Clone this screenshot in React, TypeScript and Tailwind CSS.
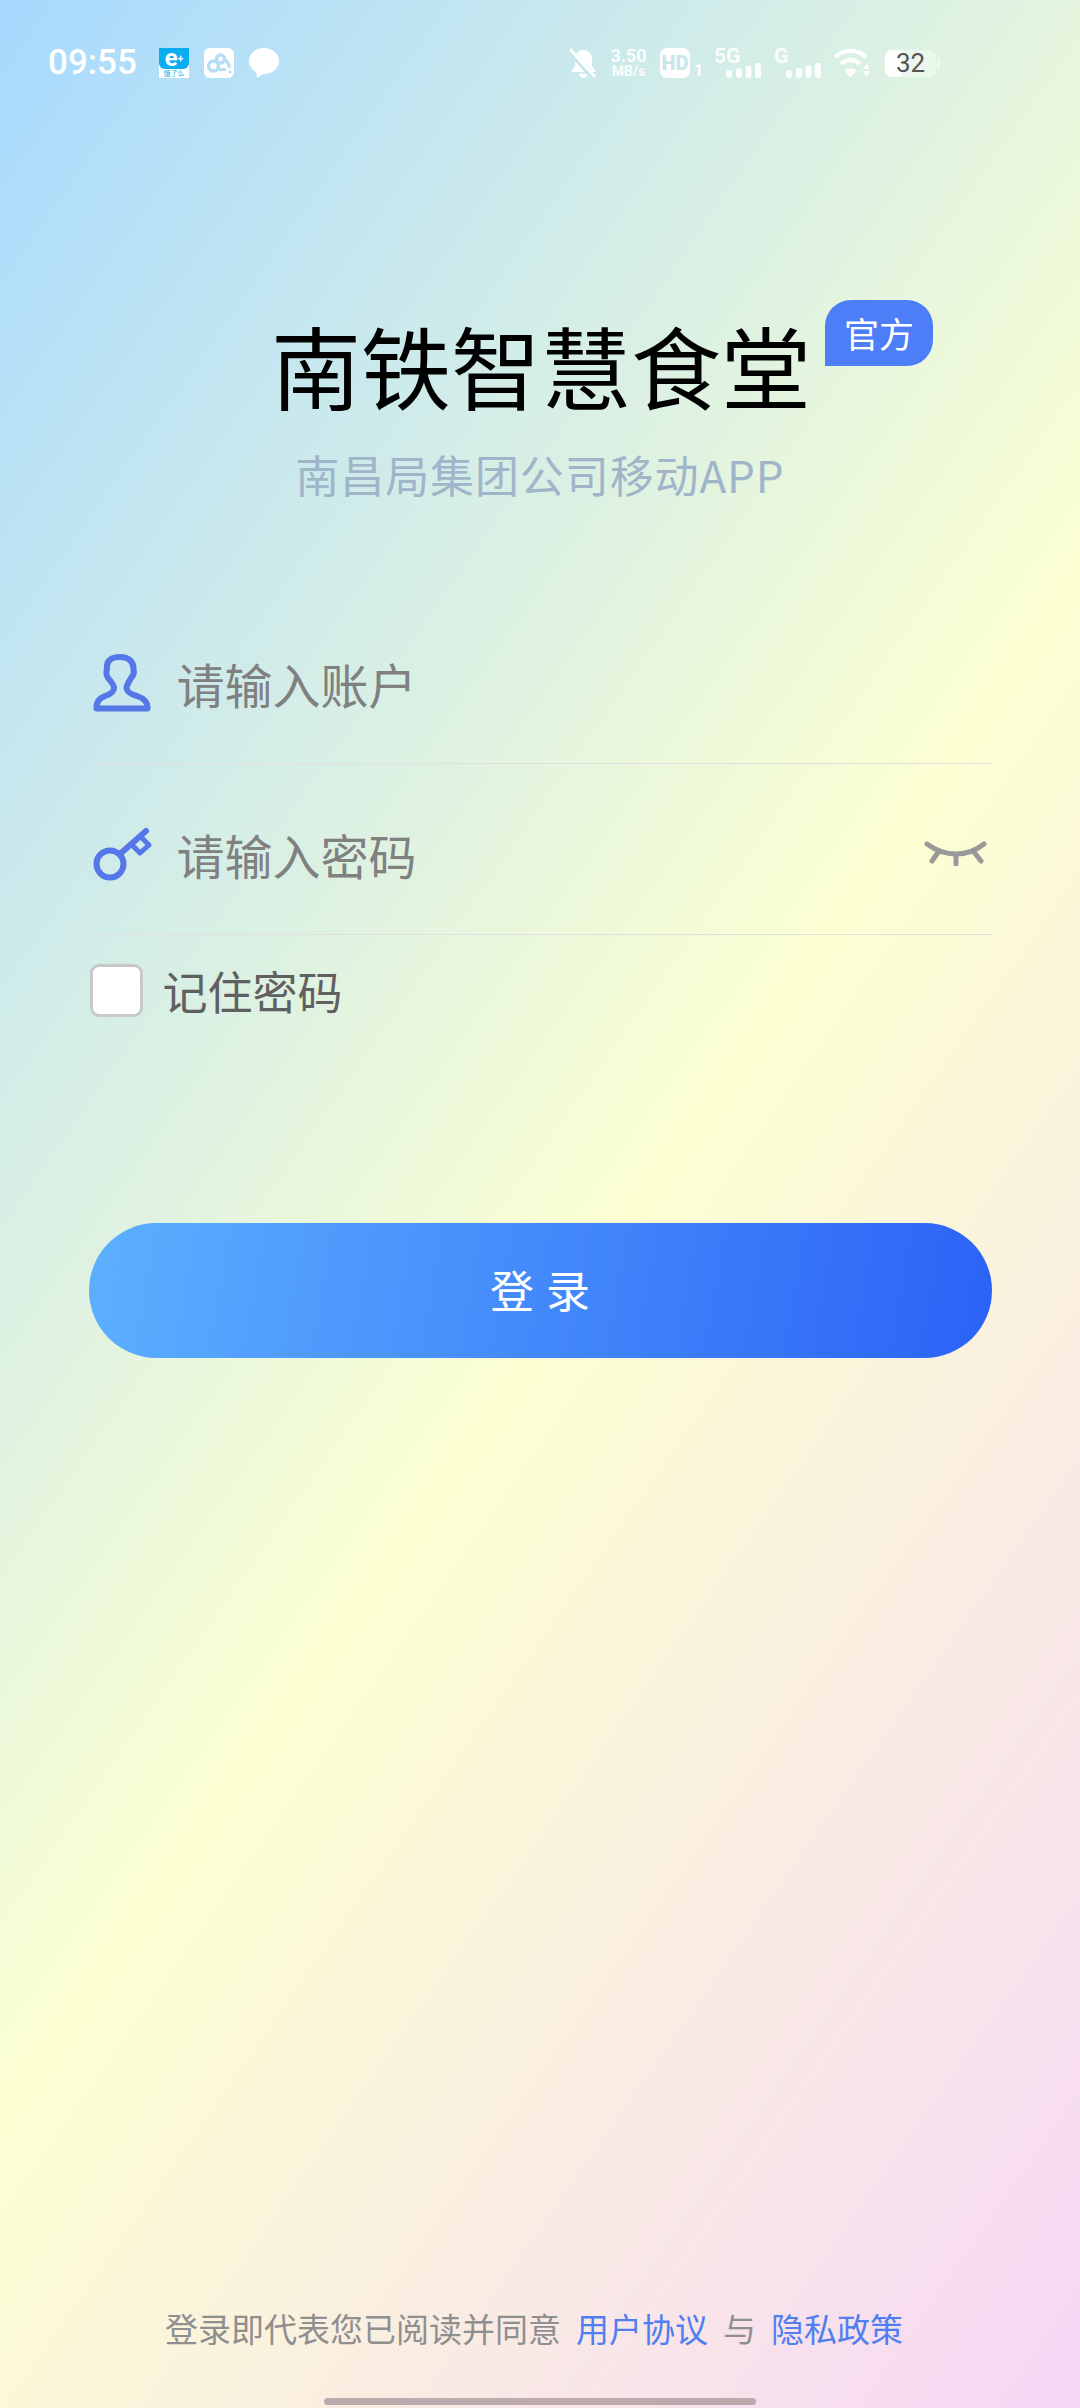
const SignalBars = () => (
  <svg width="35" height="15" viewBox="0 0 35 15" fill="#fff" fillOpacity="0.9">
    <rect x="0" y="7" width="6" height="8" rx="3" />
    <rect x="10" y="5" width="6" height="10" rx="2.500" />
    <rect x="19.500" y="2.500" width="6" height="12.500" rx="2" />
    <rect x="29" y="0" width="6" height="15" rx="2" />
  </svg>
);

const UserIcon = () => (
  <svg width="58" height="58" viewBox="0 0 58 58" fill="none" stroke="#5577e8" strokeWidth="6" strokeLinejoin="round">
    <path d="M3.500 54.500H54.500C55 48 50 44 44 42C37 40 33.500 38 33.500 34C33.500 31 36 28 38 24C41 21 41.500 19 40.500 16C41 8 36 3 27 3C18 3 13 7 14 15C13 18 13 21 15 24C18 28 21 30 21 34C21 38 18 40 12 42C7 44 3 48 3.500 54.500Z" />
  </svg>
);

const KeyIcon = () => (
  <svg width="60" height="56" viewBox="0 0 60 56" fill="none" stroke="#5577e8" strokeWidth="6" strokeLinecap="round" strokeLinejoin="round">
    <circle cx="17" cy="38" r="13.500" />
    <path d="M27 28L53 5" />
    <path d="M47 10L56 19L47 27L39 19" strokeWidth="5" />
  </svg>
);

const EyeClosed = () => (
  <svg width="63" height="25" viewBox="0 0 63 25" fill="none" stroke="#999" strokeWidth="5" strokeLinecap="round">
    <path d="M3 3C14 11 24 13 32 13C40 13 50 11 60 3" />
    <path d="M15 10L8 20M32 14V23M50 11L57 20" />
  </svg>
);

export default function App() {
  return (
    <div className="flex h-[2408px] w-[1080px] flex-col overflow-hidden bg-[linear-gradient(125deg,#a6d9ff_0%,#fcffd2_53.500%,#f6d6f6_100%)] font-['Noto_Sans_CJK_SC',sans-serif]">
      {/* status bar */}
      <div className="mt-[48px] flex h-[30px] items-center pl-[48px] font-['Roboto',sans-serif] text-white">
        <span className="w-[89px] text-[35px] leading-[30px] font-medium">09:55</span>
        <div className="ml-[22px] flex h-[30px] w-[30px] flex-col items-center bg-white">
          <div className="flex h-[21px] w-full items-center justify-center rounded-b-[6px] bg-[#0aaef0] text-[24px] leading-[21px] font-bold text-white">
            e<span className="text-[10px] leading-[10px]">+</span>
          </div>
          <span className="h-[9px] font-['Noto_Sans_CJK_SC',sans-serif] text-[7px] leading-[9px] text-[#0aaef0]">饿了么</span>
        </div>
        <svg className="ml-[15px]" width="30" height="30" viewBox="0 0 30 30">
          <rect width="30" height="30" rx="6" fill="#fff" />
          <circle cx="9.500" cy="18" r="5" fill="none" stroke="#b4ddf6" strokeWidth="3.500" />
          <circle cx="16.500" cy="11" r="4" fill="none" stroke="#b4ddf6" strokeWidth="3.500" />
          <path d="M20 11C23 13 25 16 25.500 20" stroke="#b4ddf6" strokeWidth="3" fill="none" />
          <path d="M12 21.500H22" stroke="#b4ddf6" strokeWidth="3" />
          <circle cx="26" cy="24" r="1.500" fill="#b4ddf6" />
        </svg>
        <svg className="ml-[15px]" width="30" height="30" viewBox="0 0 30 30" fill="#fff">
          <ellipse cx="15" cy="13" rx="15" ry="13" />
          <path d="M7 22L8 30L16 25Z" />
        </svg>

        <svg className="ml-[291px]" width="27" height="30" viewBox="0 0 27 30" fill="#fff" fillOpacity="0.92">
          <path d="M13.500 2C19 2 22 6 22 11V18L26 24H1L5 18V11C5 6 8 2 13.500 2Z" />
          <path d="M9 25.500H18C18 28 16 30 13.500 30C11 30 9 28 9 25.500Z" />
          <path d="M0 3L24 30" stroke="#c9e6ea" strokeWidth="6" />
          <path d="M0 1L25 29" stroke="#fff" strokeWidth="3" />
        </svg>
        <div className="ml-[13px] flex w-[37px] flex-col items-center font-bold opacity-90">
          <span className="text-[18px] leading-[16px]">3.50</span>
          <span className="mt-[1px] text-[14px] leading-[13px]">MB/s</span>
        </div>
        <div className="ml-[13px] flex h-[30px] w-[30px] items-center justify-center rounded-[7px] bg-white text-[20px] font-black text-[#c9e6e8]">HD</div>
        <span className="mt-[16px] ml-[4px] w-[10px] text-[16px] leading-[14px] font-bold opacity-90">1</span>
        <div className="ml-[10px] flex h-[30px] w-[47px] items-end">
          <span className="w-[12px] self-start text-[21px] leading-[16px] font-bold whitespace-nowrap opacity-90">5G</span>
          <SignalBars />
        </div>
        <div className="ml-[13px] flex h-[30px] w-[47px] items-end">
          <span className="w-[12px] self-start text-[21px] leading-[16px] font-bold whitespace-nowrap opacity-90">G</span>
          <SignalBars />
        </div>
        <svg className="ml-[13px]" width="36" height="30" viewBox="0 0 36 30" fill="none" stroke="#fff" strokeOpacity="0.92" strokeWidth="4.500">
          <path d="M1 9.500C9 0.500 24 0.500 32 9.500" />
          <path d="M7 16C12 10.500 21 10.500 26 16" />
          <path d="M10.500 22.500L16.500 29.500L22.500 22.500C19 19.500 14 19.500 10.500 22.500Z" fill="#fff" fillOpacity="0.92" stroke="none" />
          <path d="M29 21L32.500 16L36 21ZM29 23H36L32.500 29Z" fill="#fff" fillOpacity="0.92" stroke="none" />
        </svg>
        <div className="ml-[15px] flex items-center">
          <div className="relative flex h-[27px] w-[51px] items-center justify-center overflow-hidden rounded-[7px] bg-white/40">
            <div className="absolute top-0 left-0 h-full w-[17px] bg-white" />
            <span className="relative text-[26px] leading-none text-[#555]">32</span>
          </div>
          <div className="ml-[1px] h-[10px] w-[3px] rounded-r-[2px] bg-white/40" />
        </div>
      </div>

      {/* title */}
      <div className="relative mx-auto mt-[241px] w-fit pl-[2px]">
        <h1 className="text-[90px] leading-[90px] font-normal text-black">南铁智慧食堂</h1>
        <div className="absolute top-[-19px] left-[calc(100%+14px)] flex h-[66px] w-[108px] items-center justify-center rounded-t-[26px] rounded-br-[26px] bg-[#4d7ef7] text-[35px] text-white">官方</div>
      </div>
      <p className="mt-[37px] text-center text-[44px] leading-[56px] tracking-[0.9px] text-[#a0b4ca]">南昌局集团公司移动APP</p>

      {/* form */}
      <div className="mt-[127px] flex w-[903px] flex-col self-center pl-[1px]">
        <div className="flex h-[134px] items-center pb-[26px]">
          <div className="ml-[3px] w-[84px]">
            <UserIcon />
          </div>
          <span className="text-[48px] leading-[60px] text-[#808080]">请输入账户</span>
        </div>
        <div className="ml-[2px] h-[1px] bg-[#e0e0e0]" />
        <div className="flex h-[170px] items-center pt-[9px]">
          <div className="ml-[3px] w-[84px]">
            <KeyIcon />
          </div>
          <span className="text-[48px] leading-[60px] text-[#808080]">请输入密码</span>
          <div className="mr-[5px] ml-auto">
            <EyeClosed />
          </div>
        </div>
        <div className="ml-[2px] h-[1px] bg-[#e0e0e0]" />
        <div className="mt-[29px] flex items-center">
          <div className="h-[53px] w-[53px] rounded-[9px] border-[3px] border-[#c8c8c8] bg-white" />
          <span className="ml-[20px] text-[45px] leading-[53px] text-[#606060]">记住密码</span>
        </div>
      </div>

      {/* login */}
      <button className="mt-[206px] flex h-[135px] w-[903px] items-center justify-center self-center rounded-full bg-[linear-gradient(100deg,#5cb0ff_0%,#2b62f6_100%)] pb-[3px] pl-[12px] text-[44px] tracking-[12px] text-white">
        登录
      </button>

      {/* agreement */}
      <div className="mt-auto flex items-center justify-center gap-[15px] pr-[12px] text-[33px] leading-[44px] text-[#8f8f8f]">
        <span>登录即代表您已阅读并同意</span>
        <span className="text-[#4f7ff0]">用户协议</span>
        <span>与</span>
        <span className="text-[#4f7ff0]">隐私政策</span>
      </div>
      <div className="mt-[48px] mb-[3px] h-[7px] w-[432px] self-center rounded-full bg-[#bcaaac]" />
    </div>
  );
}
